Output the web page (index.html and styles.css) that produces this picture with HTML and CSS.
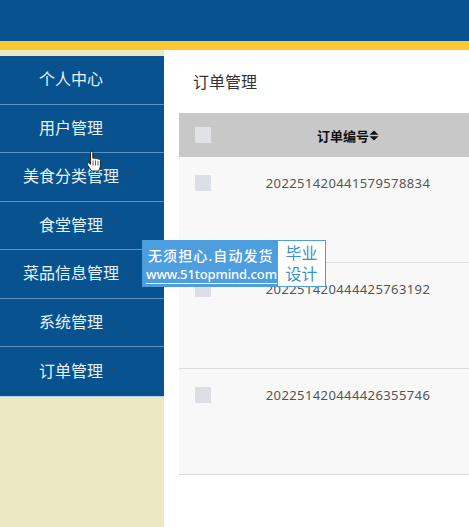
FILE: index.html
```html
<!DOCTYPE html>
<html lang="zh">

<head>
  <meta charset="UTF-8">
  <title>订单管理</title>
  <link rel="stylesheet" href="styles.css">
</head>

<body>
  <div class="top-bar"></div>
  <div class="top-stripe"></div>

  <div class="layout">
    <div class="sidebar">
      <ul class="menu">
        <li><span>个人中心</span><i class="caret"></i></li>
        <li><span>用户管理</span><i class="caret"></i></li>
        <li><span>美食分类管理</span><i class="caret"></i></li>
        <li><span>食堂管理</span><i class="caret"></i></li>
        <li><span>菜品信息管理</span><i class="caret"></i></li>
        <li><span>系统管理</span><i class="caret"></i></li>
        <li><span>订单管理</span><i class="caret"></i></li>
      </ul>
    </div>

    <div class="content">
      <h1 class="page-title">订单管理</h1>
      <div class="order-table">
        <div class="table-head">
          <div class="check-col"><span class="check head-check"></span></div>
          <div class="no-col">订单编号<svg class="sort" width="10" height="11" viewBox="0 0 10 11"><path d="M5 0.5 L9.5 4.8 H0.5 Z M5 10.5 L0.5 6.2 H9.5 Z" fill="#111"/></svg></div>
        </div>
        <div class="table-row">
          <div class="check-col"><span class="check"></span></div>
          <div class="no-col">202251420441579578834</div>
        </div>
        <div class="table-row">
          <div class="check-col"><span class="check"></span></div>
          <div class="no-col">202251420444425763192</div>
        </div>
        <div class="table-row">
          <div class="check-col"><span class="check"></span></div>
          <div class="no-col">202251420444426355746</div>
        </div>
      </div>
    </div>
  </div>

  <div class="promo">
    <div class="promo-text">
      <div class="promo-line">无须担心.自动发货</div>
      <div class="promo-url">www.51topmind.com</div>
    </div>
    <div class="promo-tag">毕业<br>设计</div>
  </div>

  <svg class="hand" width="17" height="23" viewBox="0 0 17 22">
    <path d="M4.5 1.8 C4.5 0.6 6.8 0.6 6.8 1.8 V8 C7.6 7.4 9 7.5 9.4 8.2 C10.2 7.6 11.6 7.8 12 8.7 C12.9 8.3 14.4 8.7 14.5 10 V14.5 C14.5 17 13.4 18.5 12.6 20.5 H5.6 C4.6 18.6 2.8 16.6 1.4 14.4 C0.6 13 2 11.6 3.2 12.6 L4.5 13.8 Z" fill="#fff" stroke="#1a1a1a" stroke-width="0.9"/>
    <path d="M7 10 V15 M9.5 10 V15 M12 10.5 V15" stroke="#1a1a1a" stroke-width="0.7" fill="none"/>
  </svg>
</body>

</html>
```

FILE: styles.css
```css
body {
  margin: 0;
  height: 527px;
  overflow: hidden;
  position: relative;
  background: #fff;
  font-family: "Noto Sans", "Noto Sans CJK SC", sans-serif;
}

.top-bar {
  height: 41px;
  background: #07528f;
}

.top-stripe {
  height: 9px;
  background: #fcc832;
}

.layout {
  display: flex;
  height: 477px;
}

.sidebar {
  width: 164px;
  flex-shrink: 0;
  padding-top: 6px;
  box-sizing: border-box;
  background: #ebe9c2;
}

.menu {
  list-style: none;
  margin: 0;
  padding: 0;
  background: #07528f;
  border-bottom: 1px solid #b7cfe0;
}

.menu li {
  height: 48.5px;
  box-sizing: border-box;
  display: flex;
  align-items: center;
  justify-content: center;
  gap: 5px;
  padding: 0 9px 3px 0;
  color: #e8f2f9;
  font-size: 16px;
  border-bottom: 1px solid #5a92c4;
}

.menu li:last-child {
  border-bottom: none;
}

.caret {
  width: 0;
  height: 0;
  margin-top: 1px;
  border-left: 4px solid transparent;
  border-right: 4px solid transparent;
  border-top: 4px solid #1b4c78;
}

.content {
  flex: 1;
  min-width: 0;
  padding-left: 15px;
}

.page-title {
  margin: 0;
  height: 63px;
  padding: 21px 0 0 14px;
  box-sizing: border-box;
  font-size: 16px;
  font-weight: normal;
  line-height: 23px;
  color: #333;
}

.table-head {
  height: 44px;
  display: flex;
  align-items: center;
  background: #c8c8c8;
  font-size: 13px;
  font-weight: bold;
  color: #111;
}

.table-row {
  height: 106px;
  display: flex;
  align-items: flex-start;
  padding-top: 18px;
  box-sizing: border-box;
  background: #f8f8f8;
  border-bottom: 1px solid #dcdcdc;
  font-size: 13px;
  color: #555;
}

.check-col {
  width: 48px;
  padding-left: 16px;
  box-sizing: border-box;
  flex-shrink: 0;
  line-height: 0;
}

.check {
  display: inline-block;
  width: 16px;
  height: 16px;
  background: #dcdfe6;
}

.head-check {
  background: #e0e2e6;
}

.no-col {
  flex: 1;
  display: flex;
  align-items: center;
  justify-content: center;
  white-space: nowrap;
}

.table-row .no-col {
  letter-spacing: 0.4px;
  line-height: 18px;
  margin-top: -1px;
}

.promo {
  position: absolute;
  left: 142px;
  top: 240px;
  width: 184px;
  height: 47px;
  box-sizing: border-box;
  display: flex;
  justify-content: space-between;
  padding: 1px;
  background: #4d9ede;
  color: #fff;
}

.promo-text {
  padding: 5px 0 0 3px;
}

.promo-line {
  padding-left: 2px;
  font-size: 14px;
  font-weight: 500;
  line-height: 20px;
  letter-spacing: 1.1px;
  white-space: nowrap;
}

.promo-url {
  font-size: 13px;
  font-weight: 500;
  letter-spacing: -0.1px;
  line-height: 17px;
  white-space: nowrap;
  border-bottom: 1px solid #fff;
}

.promo-tag {
  width: 47px;
  background: #fff;
  color: #3b8fd2;
  font-size: 16px;
  line-height: 21px;
  text-align: center;
  padding-top: 2px;
  box-sizing: border-box;
}

.hand {
  position: absolute;
  left: 86px;
  top: 150px;
}
```
